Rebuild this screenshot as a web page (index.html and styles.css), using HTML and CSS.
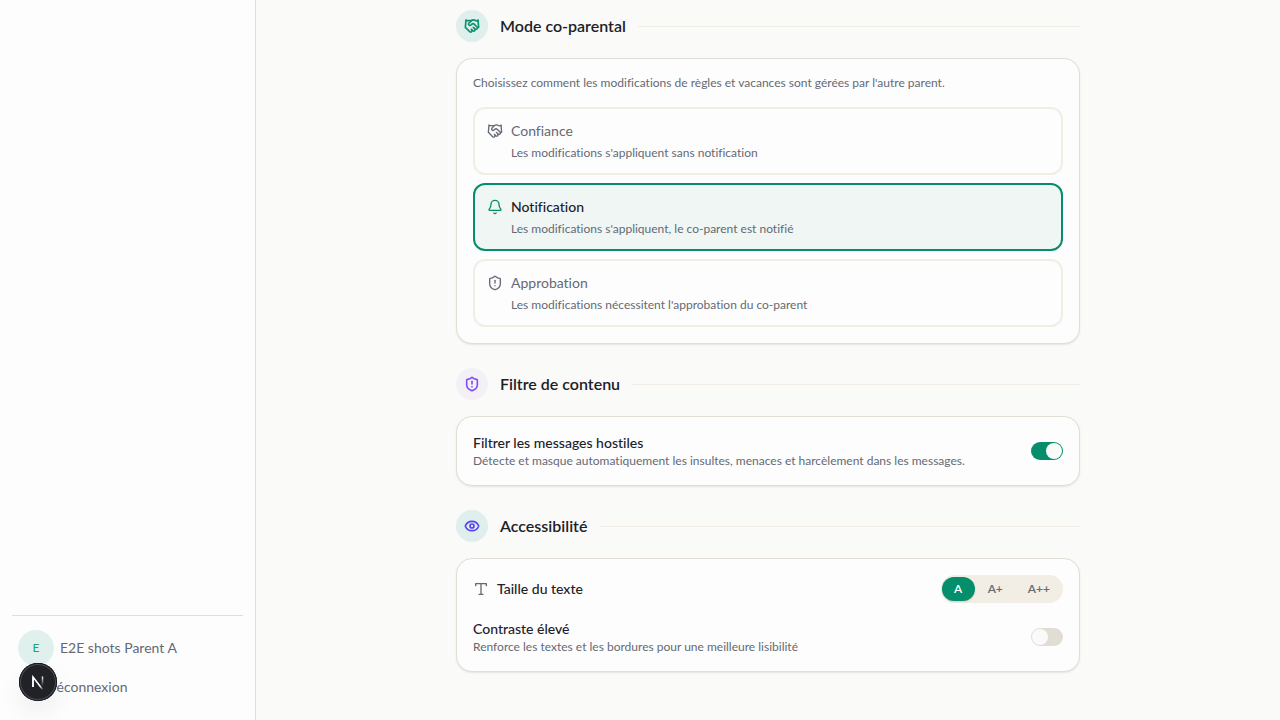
FILE: index.html
```
<!DOCTYPE html>
<html lang="fr">
<head>
	<meta charset="utf-8">
	<meta name="viewport" content="width=device-width, initial-scale=1">
	<title>Paramètres</title>
	<link rel="stylesheet" href="styles.css">
</head>
<body>
	<svg class="sprite" aria-hidden="true">
		<symbol id="handshake" viewBox="0 0 24 24">
			<path d="m11 17 2 2a1 1 0 1 0 3-3"/>
			<path d="m14 14 2.5 2.5a1 1 0 1 0 3-3l-3.88-3.88a3 3 0 0 0-4.24 0l-.88.88a1 1 0 1 1-3-3l2.81-2.81a5.79 5.79 0 0 1 7.06-.87l.47.28a2 2 0 0 0 1.42.25L21 4"/>
			<path d="m21 3 1 11h-2"/>
			<path d="M3 3 2 14l6.5 6.5a1 1 0 1 0 3-3"/>
			<path d="M3 4h8"/>
		</symbol>
		<symbol id="bell" viewBox="0 0 24 24">
			<path d="M10.268 21a2 2 0 0 0 3.464 0"/>
			<path d="M3.262 15.326A1 1 0 0 0 4 17h16a1 1 0 0 0 .74-1.673C19.41 13.956 18 12.499 18 8A6 6 0 0 0 6 8c0 4.499-1.411 5.956-2.738 7.326"/>
		</symbol>
		<symbol id="shield" viewBox="0 0 24 24">
			<path d="M20 13c0 5-3.5 7.5-7.66 8.95a1 1 0 0 1-.67-.01C7.5 20.5 4 18 4 13V6a1 1 0 0 1 1-1c2 0 4.5-1.2 6.24-2.72a1.17 1.17 0 0 1 1.52 0C14.51 3.81 17 5 19 5a1 1 0 0 1 1 1z"/>
			<path d="M12 8v4"/>
			<path d="M12 16h.01"/>
		</symbol>
		<symbol id="eye" viewBox="0 0 24 24">
			<path d="M2.062 12.348a1 1 0 0 1 0-.696 10.75 10.75 0 0 1 19.876 0 1 1 0 0 1 0 .696 10.75 10.75 0 0 1-19.876 0"/>
			<circle cx="12" cy="12" r="3"/>
		</symbol>
		<symbol id="type" viewBox="0 0 24 24">
			<path d="M4 7V4h16v3M9 20h6M12 4v16"/>
		</symbol>
	</svg>

	<div class="layout">
		<aside class="sidebar">
			<div class="account">
				<div class="user">
					<span class="avatar">E</span>
					<span>E2E shots Parent A</span>
				</div>
				<button type="button" class="logout">Déconnexion</button>
			</div>
			<button type="button" class="devtools" aria-label="Outils">
				<svg viewBox="0 0 38 38">
					<defs>
						<linearGradient id="fade-diag" gradientUnits="userSpaceOnUse" x1="20" y1="20" x2="25" y2="26">
							<stop offset="0.4" stop-color="#fff"/>
							<stop offset="1" stop-color="#fff" stop-opacity="0"/>
						</linearGradient>
						<linearGradient id="fade-bar" gradientUnits="userSpaceOnUse" x1="23" y1="13" x2="23" y2="23">
							<stop offset="0" stop-color="#fff"/>
							<stop offset="1" stop-color="#fff" stop-opacity="0"/>
						</linearGradient>
					</defs>
					<path d="M14 24V14L24 27" fill="none" stroke="url(#fade-diag)" stroke-width="1.5"/>
					<path d="M14 24V14" stroke="#fff" stroke-width="1.5"/>
					<path d="M23.5 13.500V23" stroke="url(#fade-bar)" stroke-width="1.5"/>
				</svg>
			</button>
		</aside>

		<main class="content">
			<section class="section">
				<header class="section-head">
					<span class="badge badge-teal"><svg class="icon"><use href="#handshake"/></svg></span>
					<h2>Mode co-parental</h2>
				</header>
				<div class="card modes">
					<p class="hint">Choisissez comment les modifications de règles et vacances sont gérées par l'autre parent.</p>
					<button type="button" class="mode" aria-pressed="false">
						<svg class="icon"><use href="#handshake"/></svg>
						<span class="mode-title">Confiance</span>
						<span class="hint">Les modifications s'appliquent sans notification</span>
					</button>
					<button type="button" class="mode active" aria-pressed="true">
						<svg class="icon"><use href="#bell"/></svg>
						<span class="mode-title">Notification</span>
						<span class="hint">Les modifications s'appliquent, le co-parent est notifié</span>
					</button>
					<button type="button" class="mode" aria-pressed="false">
						<svg class="icon"><use href="#shield"/></svg>
						<span class="mode-title">Approbation</span>
						<span class="hint">Les modifications nécessitent l'approbation du co-parent</span>
					</button>
				</div>
			</section>

			<section class="section">
				<header class="section-head">
					<span class="badge badge-violet"><svg class="icon"><use href="#shield"/></svg></span>
					<h2>Filtre de contenu</h2>
				</header>
				<div class="card">
					<div class="row">
						<div>
							<label class="label" for="filter">Filtrer les messages hostiles</label>
							<p class="hint">Détecte et masque automatiquement les insultes, menaces et harcèlement dans les messages.</p>
						</div>
						<input type="checkbox" role="switch" class="switch" id="filter" checked>
					</div>
				</div>
			</section>

			<section class="section">
				<header class="section-head">
					<span class="badge badge-eye"><svg class="icon"><use href="#eye"/></svg></span>
					<h2>Accessibilité</h2>
				</header>
				<div class="card">
					<div class="row">
						<div class="label with-icon"><svg class="icon"><use href="#type"/></svg>Taille du texte</div>
						<div class="sizes" role="group" aria-label="Taille du texte">
							<button type="button" class="size active" aria-pressed="true">A</button>
							<button type="button" class="size" aria-pressed="false">A+</button>
							<button type="button" class="size" aria-pressed="false">A++</button>
						</div>
					</div>
					<div class="row">
						<div>
							<label class="label" for="contrast">Contraste élevé</label>
							<p class="hint">Renforce les textes et les bordures pour une meilleure lisibilité</p>
						</div>
						<input type="checkbox" role="switch" class="switch" id="contrast">
					</div>
				</div>
			</section>
		</main>
	</div>
</body>
</html>
```
FILE: styles.css
```
* {
	margin: 0;
	padding: 0;
	box-sizing: border-box;
}
:root {
	--green: #058e6b;
	--text: #1c2129;
	--muted: #646a75;
	--line: #e2ddd4;
	--soft: #f2ede5;
	--card: #fdfdfd;
}
body {
	background: #fafaf8;
	color: var(--text);
	font-family: Lato, "Liberation Sans", sans-serif;
	font-size: 14px;
	line-height: 20px;
	font-variant-ligatures: none;
}
button {
	font: inherit;
	font-variant-ligatures: none;
	color: inherit;
	border: 0;
	background: none;
	cursor: pointer;
}
.sprite {
	display: none;
}
.icon {
	width: 16px;
	height: 16px;
	flex: none;
	fill: none;
	stroke: currentColor;
	stroke-width: 2;
	stroke-linecap: round;
	stroke-linejoin: round;
}
.layout {
	display: flex;
	min-height: 100vh;
}

/* sidebar */
.sidebar {
	position: relative;
	display: flex;
	flex-direction: column;
	justify-content: flex-end;
	width: 256px;
	flex: none;
	padding: 12px;
	background: var(--card);
	border-right: 1px solid #dedfd5;
	color: var(--muted);
}
.account {
	border-top: 1px solid #dedfd5;
	padding-top: 14px;
}
.user {
	display: flex;
	align-items: center;
	gap: 6px;
	padding: 0 6px;
}
.avatar {
	width: 36px;
	height: 36px;
	border-radius: 50%;
	background: #e0f1ed;
	color: #23a07f;
	font-size: 12px;
	line-height: 36px;
	text-align: center;
}
.logout {
	display: block;
	width: 100%;
	padding: 11px 34px;
	text-align: left;
}
.devtools {
	position: absolute;
	left: 19px;
	bottom: 19px;
	width: 38px;
	height: 38px;
	border-radius: 50%;
	background: #202226;
	box-shadow: inset 0 0 0 1px #16181b, inset 0 0 0 2px #4b4d52, 0 12px 24px rgba(0, 0, 0, 0.06);
}
.devtools svg {
	display: block;
}

/* content */
.content {
	flex: 1;
	display: flex;
	flex-direction: column;
	gap: 24px;
	max-width: 672px;
	margin: 0 auto;
	padding: 10px 24px 48px;
}
.section {
	display: flex;
	flex-direction: column;
	gap: 16px;
}
.section-head {
	display: flex;
	align-items: center;
	gap: 12px;
}
.section-head::after {
	content: "";
	flex: 1;
	height: 1px;
	background: var(--soft);
}
.section-head h2 {
	font-size: 16px;
	line-height: 24px;
	font-weight: 600;
}
.badge {
	display: flex;
	align-items: center;
	justify-content: center;
	width: 32px;
	height: 32px;
	border-radius: 50%;
	background: #deefee;
	color: #0b9470;
}
.badge-violet {
	background: #f3f1f6;
	color: #8250f5;
}
.badge-eye {
	color: #5b42f0;
}
.badge .icon {
	stroke-width: 2.5;
}
.card {
	display: flex;
	flex-direction: column;
	gap: 16px;
	padding: 16px;
	background: var(--card);
	border: 1px solid var(--line);
	border-radius: 16px;
	box-shadow: 0 1px 2px rgba(60, 50, 30, 0.1);
}
.hint {
	color: var(--muted);
	font-size: 12px;
	line-height: 16px;
}
.modes {
	gap: 8px;
}
.modes > p {
	margin-bottom: 8px;
}
.mode {
	display: grid;
	grid-template-columns: 16px 1fr;
	gap: 4px 8px;
	align-items: center;
	padding: 12px;
	border: 2px solid var(--soft);
	border-radius: 12px;
	color: var(--muted);
	text-align: left;
}
.mode .hint {
	grid-column: 2;
}
.mode.active {
	border-color: var(--green);
	background: #f0f6f4;
}
.mode.active .icon {
	color: var(--green);
}
.mode.active .mode-title {
	color: var(--text);
	font-weight: 500;
}
.row {
	display: flex;
	align-items: center;
	justify-content: space-between;
	gap: 16px;
}
.label {
	display: block;
	font-weight: 500;
}
.with-icon {
	display: flex;
	align-items: center;
	gap: 8px;
}
.with-icon .icon {
	color: var(--muted);
}
.switch {
	appearance: none;
	flex: none;
	display: flex;
	width: 32px;
	height: 18px;
	padding: 1px;
	border-radius: 9px;
	background: var(--line);
	cursor: pointer;
}
.switch::before {
	content: "";
	width: 16px;
	height: 16px;
	border-radius: 50%;
	background: #fafaf8;
}
.switch:checked {
	justify-content: flex-end;
	background: var(--green);
}
.sizes {
	display: flex;
	gap: 1px;
	padding: 2px 1px;
	border-radius: 14px;
	background: var(--soft);
}
.size {
	min-width: 33px;
	padding: 4px 12px;
	border-radius: 12px;
	color: var(--muted);
	font-size: 12px;
	line-height: 16px;
	font-weight: 600;
}
.size.active {
	background: var(--green);
	color: #fff;
	box-shadow: 0 1px 2px rgba(0, 0, 0, 0.12);
}
```
